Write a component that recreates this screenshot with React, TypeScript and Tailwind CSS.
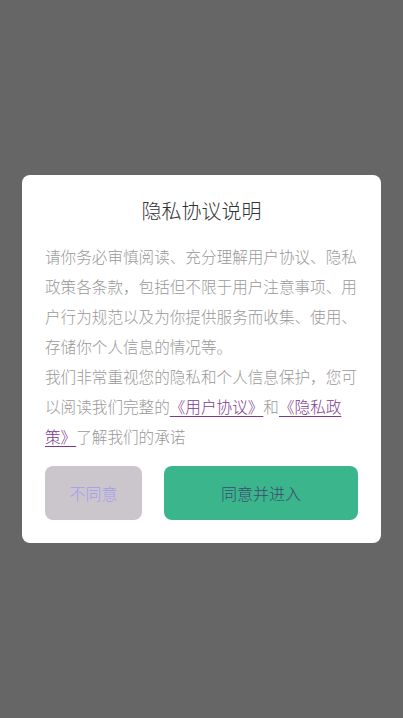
export default function App() {
  return (
    <div
      className="flex h-[718px] w-full items-start justify-center bg-[#666666] pt-[175px]"
      style={{ fontFamily: '"Noto Sans CJK SC", "Noto Sans", sans-serif' }}
    >
      <div className="w-[359px] rounded-[8px] bg-white px-[23px] pb-[23px] pt-[22px]">
        <h1 className="text-center text-[20px] font-light leading-[28px] text-[#333333]">隐私协议说明</h1>
        <div className="mt-[16px] text-[15.6px] font-light leading-[30px] text-[#999999]">
          <p>
            请你务必审慎阅读、充分理解用户协议、隐私政策各条款，包括但不限于用户注意事项、用户行为规范以及为你提供服务而收集、使用、存储你个人信息的情况等。
          </p>
          <p>
            我们非常重视您的隐私和个人信息保护，您可以阅读我们完整的
            <span className="text-[#7b3a8c] underline underline-offset-[3px]">《用户协议》</span>和
            <span className="text-[#7b3a8c] underline underline-offset-[3px]">《隐私政策》</span>了解我们的承诺
          </p>
        </div>
        <div className="mt-[15px] flex gap-[22px]">
          <button className="h-[54px] w-[97px] rounded-[8px] bg-[#cbc6cb] text-[16px] font-light text-[#a09cf0]">
            不同意
          </button>
          <button className="h-[54px] flex-1 rounded-[8px] bg-[#3bb58b] text-[16px] font-light text-[#3d4a6e]">
            同意并进入
          </button>
        </div>
      </div>
    </div>
  );
}
